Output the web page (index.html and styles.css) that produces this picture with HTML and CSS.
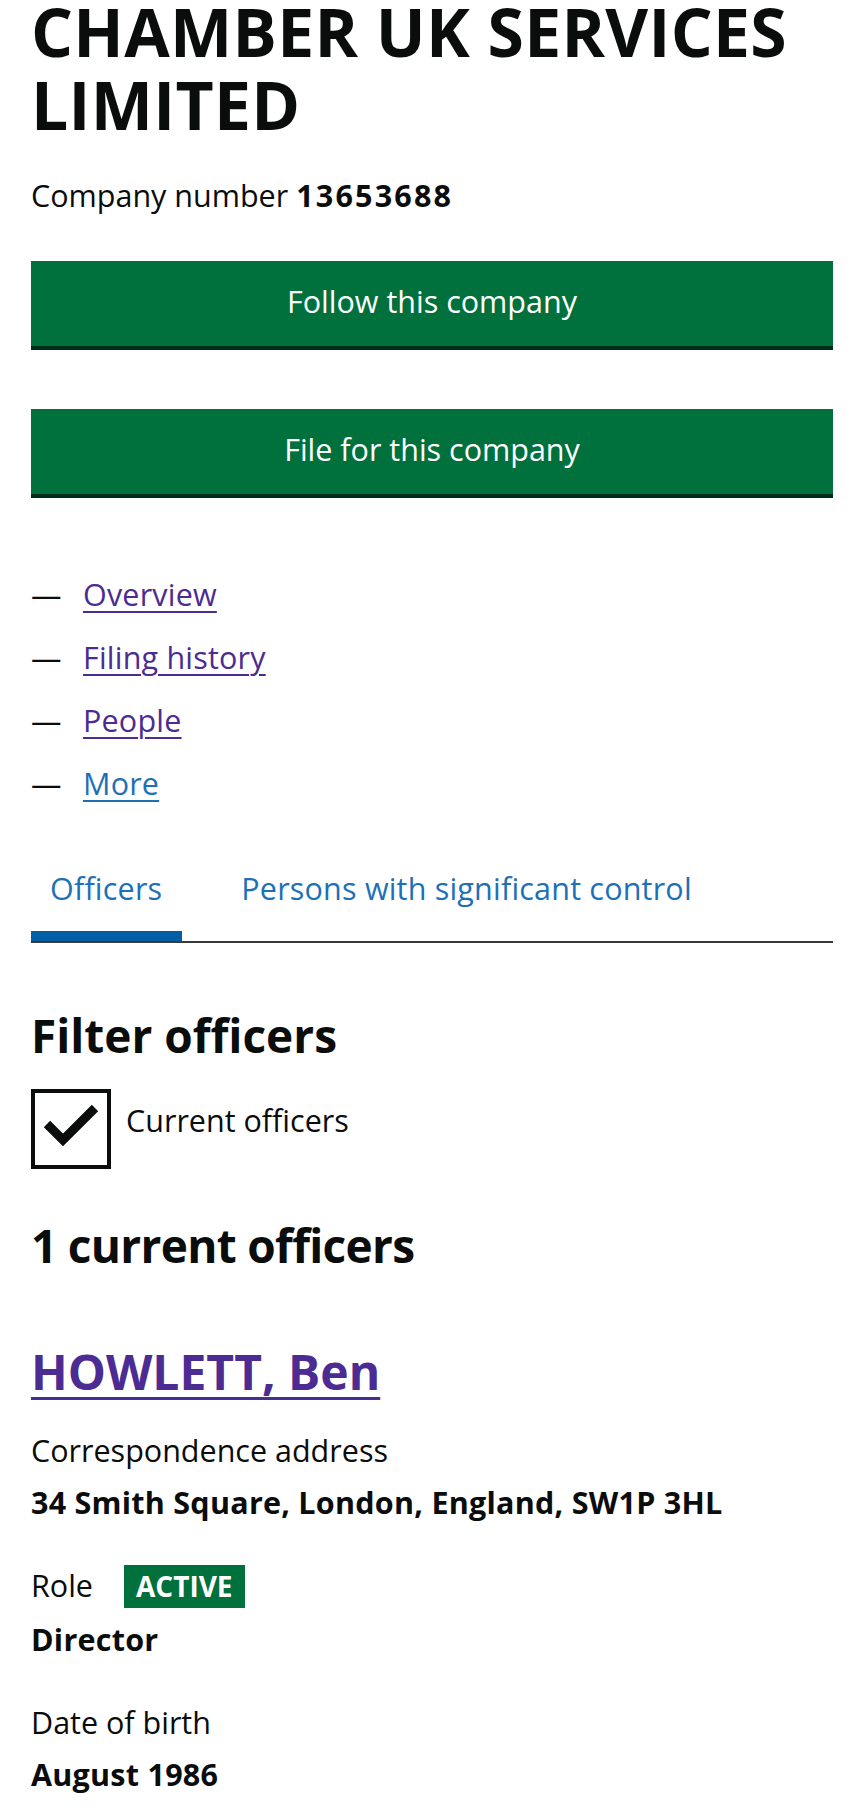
FILE: index.html
```html
<!DOCTYPE html>
<html lang="en">
<head>
<meta charset="utf-8">
<title>CHAMBER UK SERVICES LIMITED</title>
<link rel="stylesheet" href="styles.css">
</head>
<body>
<main class="page">
  <h1 class="company-name">CHAMBER UK SERVICES LIMITED</h1>
  <p class="company-number">Company number <strong class="num">13653688</strong></p>

  <a class="button button-first" href="#">Follow this company</a>
  <a class="button button-second" href="#">File for this company</a>

  <ul class="section-nav">
    <li><span class="dash">—</span><a class="link visited" href="#">Overview</a></li>
    <li><span class="dash">—</span><a class="link visited" href="#">Filing history</a></li>
    <li><span class="dash">—</span><a class="link visited" href="#">People</a></li>
    <li><span class="dash">—</span><a class="link" href="#">More</a></li>
  </ul>

  <ul class="tabs">
    <li><a class="tab tab-active" href="#">Officers</a></li>
    <li><a class="tab" href="#">Persons with significant control</a></li>
  </ul>

  <h2 class="heading filter-heading">Filter officers</h2>
  <div class="checkbox-row">
    <span class="checkbox-box">
      <svg class="checkmark" width="72" height="72" viewBox="0 0 72 72" aria-hidden="true">
        <polyline points="12,31 28,47 60,15" fill="none" stroke="#0b0c0c" stroke-width="9" stroke-linecap="butt" stroke-linejoin="miter"/>
      </svg>
    </span>
    <span class="checkbox-label">Current officers</span>
  </div>

  <h2 class="heading count-heading">1 current officers</h2>

  <h2 class="officer-name"><a class="name-link" href="#">HOWLETT, Ben</a></h2>

  <dl class="details">
    <dt class="label">Correspondence address</dt>
    <dd class="value">34 Smith Square, London, England, SW1P 3HL</dd>

    <dt class="label role-row"><span>Role</span><span class="tag">ACTIVE</span></dt>
    <dd class="value">Director</dd>

    <dt class="label">Date of birth</dt>
    <dd class="value">August 1986</dd>
  </dl>
</main>
</body>
</html>
```

FILE: styles.css
```css
html, body {
  margin: 0;
  padding: 0;
  background: #ffffff;
}

body {
  font-family: "Open Sans", "Liberation Sans", Arial, sans-serif;
  color: #0b0c0c;
}

.page {
  padding: 0 31px;
}

.company-name {
  margin: -5px 0 0;
  font-size: 66px;
  line-height: 73px;
  font-weight: 700;
  letter-spacing: 0.3px;
}

.company-number {
  margin: 34px 0 0;
  font-size: 30.5px;
  line-height: 41px;
}

.num {
  font-weight: 700;
  letter-spacing: 2.2px;
}

.button {
  display: block;
  background: #00703c;
  color: #ffffff;
  text-decoration: none;
  text-align: center;
  font-size: 30.5px;
  line-height: 41px;
  padding: 20px 0 24px;
  box-shadow: 0 4px 0 #002d18;
}

.button-first {
  margin-top: 45px;
}

.button-second {
  margin-top: 63px;
}

.section-nav {
  list-style: none;
  margin: 80px 0 0;
  padding: 0;
  font-size: 30.5px;
  line-height: 41px;
}

.section-nav li {
  display: flex;
  margin-bottom: 22px;
}

.section-nav li:last-child {
  margin-bottom: 0;
}

.dash {
  display: inline-block;
  width: 52px;
  flex: none;
}

.link {
  color: #1d70b8;
  text-decoration: underline;
  text-decoration-thickness: 2px;
  text-underline-offset: 5px;
  letter-spacing: 0.2px;
}

.link.visited {
  color: #4c2c92;
}

.tabs {
  list-style: none;
  margin: 64px 0 0;
  padding: 0;
  display: flex;
  border-bottom: 2px solid #3a3a3a;
  font-size: 30.5px;
  line-height: 41px;
}

.tabs li {
  margin-right: 40px;
}

.tab {
  display: block;
  padding: 0 20px 22px 19px;
  color: #1d70b8;
  text-decoration: none;
  border-bottom: 10px solid transparent;
  letter-spacing: 0.2px;
}

.tab-active {
  border-bottom-color: #005ea5;
}

.heading {
  margin: 0;
  font-size: 46px;
  line-height: 50px;
  font-weight: 700;
}

.filter-heading {
  margin-top: 67px;
}

.checkbox-row {
  display: flex;
  align-items: flex-start;
  margin-top: 29px;
}

.checkbox-box {
  display: block;
  box-sizing: border-box;
  width: 80px;
  height: 80px;
  border: 4px solid #0b0c0c;
  flex: none;
}

.checkmark {
  display: block;
}

.checkbox-label {
  font-size: 30.5px;
  line-height: 41px;
  padding: 11px 0 0 15px;
}

.count-heading {
  margin-top: 51px;
  letter-spacing: -0.7px;
}

.officer-name {
  margin: 76px 0 0;
  font-size: 48px;
  line-height: 52px;
  font-weight: 700;
}

.name-link {
  color: #4c2c92;
  text-decoration: underline;
  text-decoration-thickness: 3px;
  text-underline-offset: 7px;
}

.details {
  margin: 32px 0 0;
  font-size: 30.5px;
  line-height: 41px;
}

.label {
  margin: 42px 0 0;
}

.details .label:first-child {
  margin-top: 0;
}

.value {
  margin: 11px 0 0;
  font-weight: 700;
  letter-spacing: 0.25px;
}

.role-row {
  display: flex;
  align-items: baseline;
}

.tag {
  display: inline-block;
  margin-left: 31px;
  padding: 0 12px;
  background: #00703c;
  color: #ffffff;
  font-size: 28px;
  line-height: 43px;
  font-weight: 700;
}
```
